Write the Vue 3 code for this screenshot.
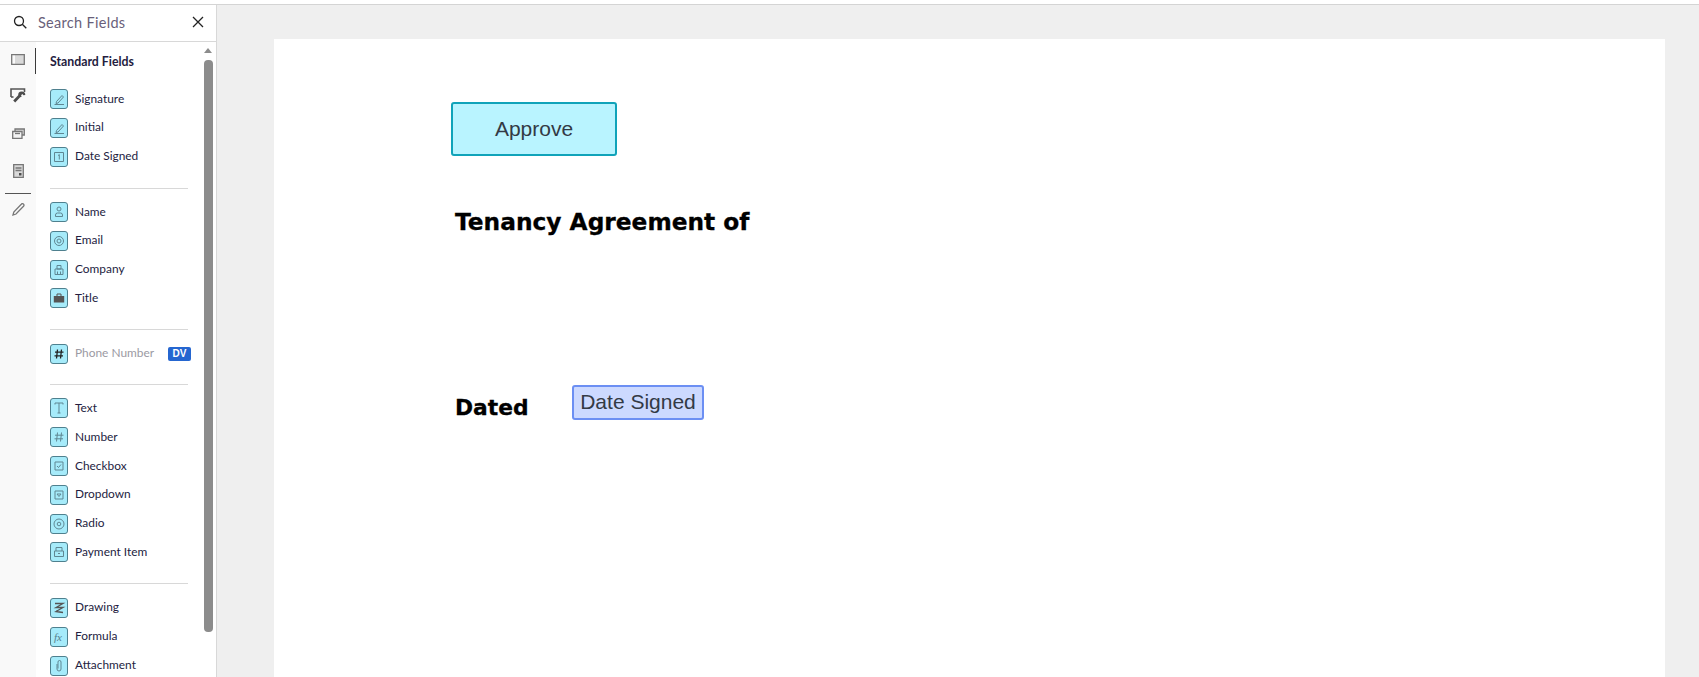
<script setup>
const icons = {
  pen: ["M6.5 12.5l5.5-6 1.500 1.500-5.500 6-2 .5z", "M4.500 15.500h9.500"],
  date: ["M4.500 5.500h9v9h-9z", "M9.300 7.500v5", "M8 8.700l1.300-1.200"],
  user: ["M9 5a2 2 0 1 1 0 4a2 2 0 1 1 0-4z", "M5.500 14.500v-1.500a2 2 0 0 1 2-2h3a2 2 0 0 1 2 2v1.500z"],
  email: ["M9 5.500a4.500 4.500 0 1 1 0 9a4.500 4.500 0 1 1 0-9z", "M9 8a2 2 0 1 1 0 4a2 2 0 1 1 0-4z"],
  company: ["M7 5.500h4v3.500h-4z", "M5 9h8v5.500h-8z", "M7.500 11.500v3", "M10.500 11.500v3"],
  number: ["M7.500 5.500l-1 9", "M11.500 5.500l-1 9", "M5 8.200h8.500", "M4.500 11.800h8.500"],
  text: ["M5 6.500v-1.500h8v1.500", "M9 5v10", "M7.500 15h3"],
  check: ["M5 6h8v8h-8z", "M7 10l1.500 1.500 2.500-3"],
  drop: ["M5 6h8v8h-8z", "M7 9h4l-2 2.500z"],
  radio: ["M9 5a5 5 0 1 1 0 10a5 5 0 1 1 0-10z", "M9 8.200a1.800 1.800 0 1 1 0 3.600a1.800 1.800 0 1 1 0-3.600z"],
  pay: ["M4.500 9h9v5.500h-9z", "M6 9v-3.500h6v3.500", "M8 11.500h2"],
  attach: ["M7 8v5a2 2 0 0 0 4 0v-7a1.500 1.500 0 0 0-3 0v6.500"],
};

const groups = [
  [
    { label: "Signature", icon: "pen" },
    { label: "Initial", icon: "pen" },
    { label: "Date Signed", icon: "date" },
  ],
  [
    { label: "Name", icon: "user" },
    { label: "Email", icon: "email" },
    { label: "Company", icon: "company" },
    { label: "Title", icon: "title" },
  ],
  [{ label: "Phone Number", icon: "number", locked: true }],
  [
    { label: "Text", icon: "text" },
    { label: "Number", icon: "number" },
    { label: "Checkbox", icon: "check" },
    { label: "Dropdown", icon: "drop" },
    { label: "Radio", icon: "radio" },
    { label: "Payment Item", icon: "pay" },
  ],
  [
    { label: "Drawing", icon: "draw" },
    { label: "Formula", icon: "formula" },
    { label: "Attachment", icon: "attach" },
  ],
];
</script>

<template>
  <div class="page">
    <aside class="sidebar">
      <div class="search">
        <svg class="search__icon" width="14" height="14" viewBox="0 0 14 14">
          <circle cx="6" cy="6" r="4.500" />
          <path d="M9.300 9.300l4 4" />
        </svg>
        <span class="search__text">Search Fields</span>
        <svg class="search__close" width="12" height="12" viewBox="0 0 12 12">
          <path d="M1 1l10 10M11 1l-10 10" />
        </svg>
      </div>

      <div class="sidebar__body">
        <nav class="rail">
          <svg class="rail__icon" width="14" height="11" viewBox="0 0 14 11">
            <path class="rail__fill" d="M4 1h9v9h-9z" />
            <path d="M.700.700h12.600v9.600h-12.600z" />
          </svg>
          <svg class="rail__icon rail__icon--tools" width="16" height="15" viewBox="0 0 16 15">
            <path d="M1 9v-8h13.500v3" />
            <path d="M1 9h2.500" />
            <path class="rail__dark" d="M11.500 3.500a3.300 3.300 0 0 1 3.800 3.500l-1.800.3-1.200-1.300-1.200 1.200.5 1.500-1.400.5-5 5.300-2-2 5-5.300a3.500 3.500 0 0 1 3.300-3.700z" />
          </svg>
          <svg class="rail__icon" width="13" height="11" viewBox="0 0 13 11">
            <path class="rail__fill" d="M3 1h9.300v6h-9.300z" />
            <path d="M3 1h9.300v6h-9.300z" />
            <path class="rail__solid" d="M.700 3.500h9.300v6.800h-9.300z" />
            <path d="M3 5.500h5" />
          </svg>
          <svg class="rail__icon" width="11" height="14" viewBox="0 0 11 14">
            <path class="rail__fill" d="M.700.700h9.600v12.600h-9.600z" />
            <path d="M.700.700h9.600v12.600h-9.600z" />
            <path d="M2.500 4h6M2.500 6.500h6" />
            <path class="rail__dark" d="M6 9h2.500v2.500h-2.500z" />
          </svg>
          <span class="rail__line"></span>
          <svg class="rail__icon" width="13" height="13" viewBox="0 0 13 13">
            <path d="M1 12l.8-3 7.500-7.800a1.200 1.200 0 0 1 2.200 2l-7.500 7.800z" />
          </svg>
          <span class="rail__active"></span>
        </nav>

        <div class="fields">
          <h2 class="fields__title">Standard Fields</h2>
          <section v-for="(group, i) in groups" :key="i" class="group">
            <div v-for="item in group" :key="item.label" class="field" :class="{ 'field--locked': item.locked }">
              <span class="field__icon">
                <svg width="18" height="20" viewBox="0 0 18 20">
                  <template v-if="item.icon === 'title'">
                    <path class="fill" d="M3.800 8h10.400v6.500h-10.400z" />
                    <path d="M7 8v-2h4v2" class="dark" />
                  </template>
                  <path v-else-if="item.icon === 'draw'" class="dark bold" d="M5 5.500h8l-7 4h7l-7 4 7 1" />
                  <text v-else-if="item.icon === 'formula'" x="4" y="14" class="formula">fx</text>
                  <path v-for="d in icons[item.icon]" v-else :key="d" :d="d" />
                </svg>
              </span>
              <span class="field__label">{{ item.label }}</span>
              <span v-if="item.locked" class="badge">DV</span>
            </div>
          </section>
        </div>

        <div class="scrollbar">
          <span class="scrollbar__arrow"></span>
          <span class="scrollbar__thumb"></span>
        </div>
      </div>
    </aside>

    <main class="viewer">
      <div class="paper">
        <h1 class="doc-title">Tenancy Agreement of</h1>
        <h1 class="doc-dated">Dated</h1>
        <div class="tag tag--approve">Approve</div>
        <div class="tag tag--date">Date Signed</div>
      </div>
    </main>
  </div>
</template>

<style>
html,
body {
  margin: 0;
  overflow: hidden;
  background: #fff;
}
</style>

<style scoped>
.page {
  display: flex;
  height: 673px;
  margin-top: 4px;
  border-top: 1px solid #d4d4d4;
  box-sizing: border-box;
  overflow: hidden;
  font-family: Lato, "Open Sans", sans-serif;
}

.sidebar {
  width: 217px;
  flex: none;
  display: flex;
  flex-direction: column;
  background: #fff;
  border-right: 1px solid #d8d8d8;
  box-sizing: border-box;
}

.search {
  height: 37px;
  flex: none;
  display: flex;
  align-items: center;
  padding: 0 12px 2px 13px;
  border-bottom: 1px solid #d8d8d8;
  box-sizing: border-box;
}

.search svg {
  fill: none;
  stroke: #222;
  stroke-width: 1.300;
}

.search__text {
  margin-left: 11px;
  font-size: 14.500px;
  color: #695f7a;
  letter-spacing: 0.300px;
}

.search__close {
  margin-left: auto;
}

.sidebar__body {
  position: relative;
  flex: 1;
  display: flex;
  min-height: 0;
}

.rail {
  position: relative;
  width: 36px;
  flex: none;
  display: flex;
  flex-direction: column;
  align-items: center;
  background: #f9f9f9;
}

.rail__icon {
  flex: none;
  fill: none;
  stroke: #777;
  stroke-width: 1.300;
}

.rail__icon:nth-child(1) {
  margin-top: 12px;
}

.rail__icon:nth-child(2) {
  margin-top: 23px;
}

.rail__icon:nth-child(3) {
  margin-top: 25px;
}

.rail__icon:nth-child(4) {
  margin-top: 25px;
}

.rail__icon:nth-child(6) {
  margin-top: 9px;
}

.rail__icon--tools {
  stroke: #555;
  stroke-width: 1.600;
}

.rail__fill {
  fill: #d9d9d9;
  stroke: none;
}

.rail__dark {
  fill: #4c4c4c;
  stroke: none;
}

.rail__solid {
  fill: #f4f4f4;
}

.rail__line {
  width: 26px;
  height: 1px;
  margin-top: 15px;
  background: #555;
}

.rail__active {
  position: absolute;
  top: 6px;
  right: 0;
  width: 1px;
  height: 26px;
  background: #3b3b3b;
}

.fields {
  flex: 1;
  min-width: 0;
  padding-left: 14px;
}

.fields__title {
  margin: 0;
  padding-top: 12px;
  font-size: 12.300px;
  font-weight: 700;
  line-height: 16px;
  color: #241d3f;
}

.group {
  margin: 0 16px 0 0;
  padding: 13.500px 0 21px;
  border-bottom: 1px solid #d8d8d8;
}

.group:nth-of-type(1) {
  padding-top: 19px;
}

.group:nth-of-type(3) {
  padding-bottom: 20px;
}

.group:last-child {
  border-bottom: 0;
}

.field {
  position: relative;
  display: flex;
  align-items: center;
  height: 20px;
  margin-bottom: 8.800px;
}

.field:last-child {
  margin-bottom: 0;
}

.field__icon {
  width: 18px;
  height: 20px;
  flex: none;
  background: #a6ebfa;
  border: 1px solid #4f808e;
  border-radius: 3px;
  box-sizing: border-box;
  overflow: hidden;
}

.field__icon svg {
  display: block;
  margin: -1px;
  fill: none;
  stroke: #5f8793;
  stroke-width: 1;
}

.field__icon .fill {
  fill: #555;
  stroke: none;
}

.field__icon .dark {
  stroke: #555;
}

.field__icon .bold {
  stroke-width: 1.300;
}

.formula {
  font-family: "Liberation Serif", serif;
  font-style: italic;
  font-size: 11px;
  fill: #55808c;
  stroke: none;
}

.field__label {
  margin-left: 7px;
  padding-bottom: 2px;
  font-size: 11.900px;
  color: #241d3f;
  white-space: nowrap;
}

.field--locked .field__label {
  color: #9b9aa3;
}

.field--locked .field__icon svg {
  stroke: #222;
  stroke-width: 1.300;
}

.badge {
  position: absolute;
  top: 3px;
  left: 118px;
  width: 23px;
  height: 14px;
  background: #2566d0;
  border-radius: 2px;
  color: #fff;
  font-family: "Liberation Sans", sans-serif;
  font-size: 10px;
  font-weight: 700;
  line-height: 14px;
  text-align: center;
}

.scrollbar {
  position: relative;
  width: 12px;
  flex: none;
}

.scrollbar__arrow {
  position: absolute;
  top: 6px;
  left: 0;
  border: 4.500px solid transparent;
  border-top: 0;
  border-bottom: 5px solid #8c8c8c;
}

.scrollbar__thumb {
  position: absolute;
  top: 18px;
  left: 0;
  width: 9px;
  height: 572px;
  background: #8c8c8c;
  border-radius: 4px;
}

.viewer {
  flex: 1;
  min-width: 0;
  padding: 34px 34px 0 57px;
  background: #efefef;
}

.paper {
  position: relative;
  height: 700px;
  padding: 167px 0 0 181px;
  background: #fff;
  box-sizing: border-box;
}

.doc-title,
.doc-dated {
  margin: 0;
  font-family: "DejaVu Sans", sans-serif;
  font-size: 23.300px;
  font-weight: 700;
  line-height: 32px;
  color: #000;
  -webkit-text-stroke: 0.3px #000;
}

.doc-dated {
  margin-top: 153.500px;
  font-size: 21.800px;
}

.tag {
  position: absolute;
  display: flex;
  align-items: center;
  justify-content: center;
  box-sizing: border-box;
  border-radius: 3px;
  font-family: "Liberation Sans", sans-serif;
  font-size: 21px;
  color: #333a45;
}

.tag--approve {
  left: 177px;
  top: 63px;
  width: 166px;
  height: 54px;
  background: #b9f4ff;
  border: 2px solid #10a3b9;
}

.tag--date {
  left: 298px;
  top: 346px;
  width: 132px;
  height: 35px;
  padding-bottom: 2px;
  background: #ccd9ff;
  border: 2px solid #6c8ff3;
}
</style>
